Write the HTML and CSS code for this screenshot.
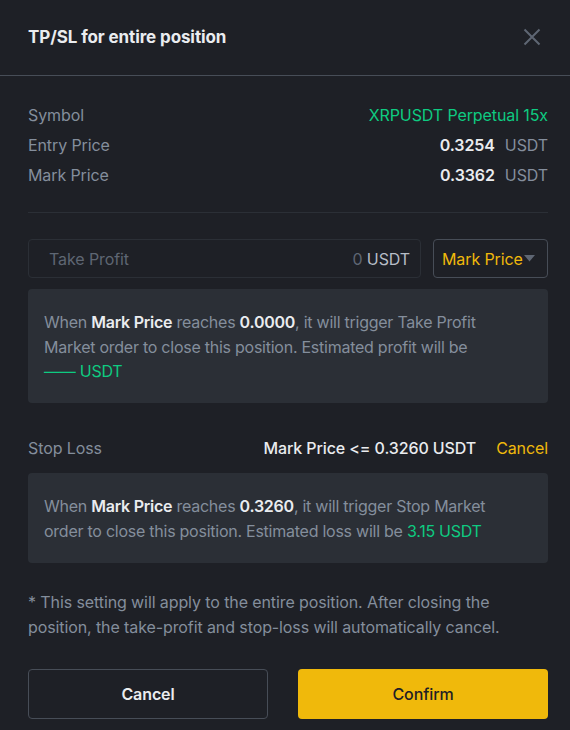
FILE: index.html
```html
<!DOCTYPE html>
<html>
<head>
<meta charset="utf-8">
<link rel="stylesheet" href="styles.css">
</head>
<body>
<div class="modal">
  <div class="header">
    <div class="title">TP/SL for entire position</div>
    <svg class="close" width="18" height="18" viewBox="0 0 18 18"><path d="M1.5 1.5 L16.5 16.5 M16.5 1.5 L1.5 16.5" stroke="#5e6673" stroke-width="2" fill="none"/></svg>
  </div>
  <div class="body">
    <div class="info">
      <div class="row"><span class="label">Symbol</span><span class="value green">XRPUSDT Perpetual 15x</span></div>
      <div class="row"><span class="label">Entry Price</span><span class="value"><b class="val">0.3254</b><span class="unit">USDT</span></span></div>
      <div class="row"><span class="label">Mark Price</span><span class="value"><b class="val">0.3362</b><span class="unit">USDT</span></span></div>
    </div>
    <div class="divider"></div>
    <div class="tp-row">
      <div class="input">
        <span class="ph">Take Profit</span>
        <span class="right"><span class="zero">0</span> <span class="cur">USDT</span></span>
      </div>
      <div class="select">
        <span>Mark Price</span>
        <svg width="11" height="7" viewBox="0 0 11 7"><path d="M0 0 H11 L5.5 6.5 Z" fill="#5e6673"/></svg>
      </div>
    </div>
    <div class="box box1">
      When <b>Mark Price</b> reaches <b>0.0000</b>, it will trigger Take Profit Market order to close this position. Estimated profit will be <span class="green">—— USDT</span>
    </div>
    <div class="sl-row">
      <span class="label">Stop Loss</span>
      <span class="sl-right"><span class="cond">Mark Price &lt;= 0.3260 USDT</span><span class="yellow">Cancel</span></span>
    </div>
    <div class="box box2">
      When <b>Mark Price</b> reaches <b>0.3260</b>, it will trigger Stop Market order to close this position. Estimated loss will be <span class="green">3.15 USDT</span>
    </div>
    <p class="note">* This setting will apply to the entire position. After closing the position, the take-profit and stop-loss will automatically cancel.</p>
    <div class="buttons">
      <button class="btn cancel">Cancel</button>
      <button class="btn confirm">Confirm</button>
    </div>
  </div>
</div>
</body>
</html>
```
FILE: styles.css
```css
* { box-sizing: border-box; }
html, body { margin: 0; padding: 0; background: #1e2026; }
body { font-family: Inter, Roboto, "Liberation Sans", sans-serif; color: #848e9c; font-size: 16px; letter-spacing: -0.1px; }
.modal { width: 570px; height: 730px; background: #1e2026; overflow: hidden; }
.header { height: 76px; display: flex; align-items: center; justify-content: space-between; padding: 0 29px 2px 28px; border-bottom: 1px solid #474d57; }
.title { color: #eaecef; font-size: 17px; font-weight: 700; letter-spacing: -0.1px; }
.close { display: block; }
.body { width: 570px; padding: 0 22px 0 28px; }
.info { padding-top: 24px; }
.row { display: flex; justify-content: space-between; height: 30px; line-height: 30px; }
.value { text-align: right; white-space: nowrap; }
.green { color: #0ecb81; }
.val { color: #eaecef; font-weight: 600; }
.unit { margin-left: 10px; }
.divider { height: 1px; background: #2b2f36; margin-top: 22px; }
.tp-row { display: flex; gap: 12px; margin-top: 26px; height: 39px; }
.input { flex: 1; border: 1px solid #2b2f36; border-radius: 4px; display: flex; justify-content: space-between; align-items: center; padding: 0 10px 0 20px; }
.ph { color: #5e6673; }
.zero { color: #5e6673; }
.cur { color: #b7bdc6; }
.select { width: 115px; border: 1px solid #474d57; border-radius: 4px; display: flex; align-items: center; padding-left: 8px; gap: 1px; color: #f0b90b; white-space: nowrap; }
.box { background: #2b2f36; border-radius: 4px; padding: 21px 60px 20px 16px; line-height: 24.5px; margin-top: 11px; letter-spacing: -0.25px; }
.box b { color: #eaecef; font-weight: 600; }
.box1 { height: 114px; }
.box2 { height: 90px; margin-top: 13px; }
.sl-row { display: flex; justify-content: space-between; margin-top: 33px; line-height: 24px; }
.sl-right { display: flex; gap: 20px; }
.cond { color: #eaecef; font-weight: 500; }
.yellow { color: #f0b90b; }
.note { margin: 27px 0 0; line-height: 25px; }
.buttons { display: flex; gap: 30px; margin-top: 29px; }
.btn { font-family: inherit; font-size: 16px; height: 50px; border-radius: 4px; cursor: pointer; letter-spacing: -0.1px; }
.cancel { width: 240px; background: transparent; border: 1px solid #474d57; color: #eaecef; font-weight: 600; }
.confirm { flex: 1; background: #f0b90b; border: none; color: #1e2026; font-weight: 500; }
```
